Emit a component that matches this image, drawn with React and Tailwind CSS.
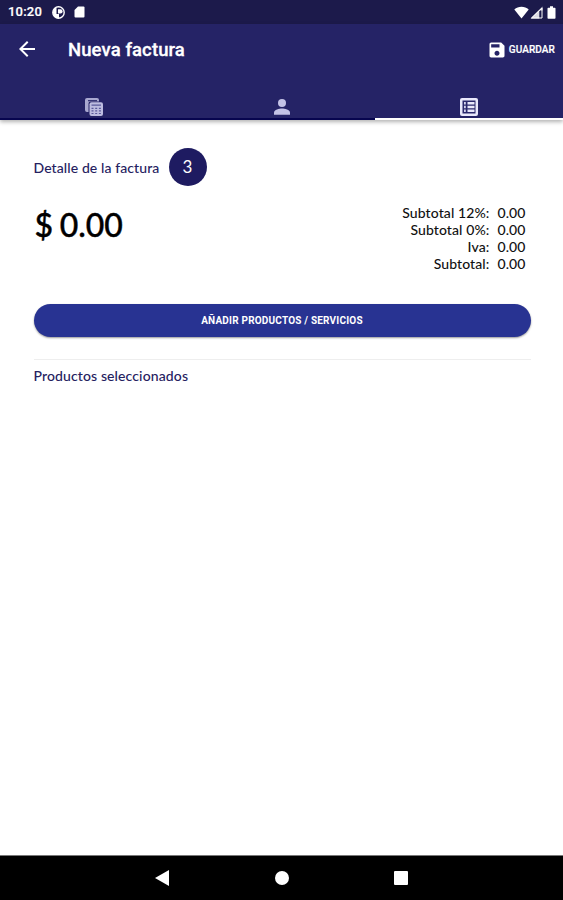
const totals = [
    { label: 'Subtotal 12%:', value: '0.00' },
    { label: 'Subtotal 0%:', value: '0.00' },
    { label: 'Iva:', value: '0.00' },
    { label: 'Subtotal:', value: '0.00' },
];

const StatusBar = () => (
    <div className="h-6 shrink-0 bg-[#1c1a4b] flex items-center justify-between pl-2 pr-[7px] text-white">
        <div className="flex items-center">
            <span className="w-[44px] text-[13px] leading-6 font-medium tracking-[0.2px] [-webkit-text-stroke:0.2px]">10:20</span>
            <svg className="w-[13px] h-[13px]" viewBox="0 0 13 13">
                <circle cx="6.5" cy="6.5" r="5.7" fill="none" stroke="currentColor" strokeWidth="1.4" />
                <path fill="currentColor" d="M1 6.500a5.500 5.500 0 0 1 3.500-5.200V8H7v4.500A6 6 0 0 1 1 6.500z" />
                <path fill="currentColor" d="M6 3.300h2.500a2.100 2.100 0 0 1 0 4.200H6z" />
            </svg>
            <svg className="w-[11px] h-[12px] ml-[9px]" viewBox="0 0 11 12">
                <path fill="currentColor" d="M4 .5h5.500a1 1 0 0 1 1 1v9a1 1 0 0 1-1 1h-8a1 1 0 0 1-1-1V4z" />
            </svg>
        </div>
        <div className="flex items-center">
            <svg className="w-[15px] h-[13px]" viewBox="0 0 15 13">
                <path fill="currentColor" d="M7.500 12.500.3 3.600C2.300 1.800 4.800.8 7.500.8s5.200 1 7.200 2.800z" />
            </svg>
            <svg className="w-[13px] h-[13px] ml-px" viewBox="0 0 13 13">
                <path fill="currentColor" fillOpacity=".85" d="M.5 12.500 12.500.5v4H9.300v8z" />
                <path fill="none" stroke="currentColor" strokeWidth="1" d="M1.500 12H12V2z" />
            </svg>
            <svg className="w-[9px] h-[13px] ml-[4px]" viewBox="0 0 9 13">
                <path fill="currentColor" d="M3 .3h3v1.400h1.700q.8 0 .8.800v9.400q0 .8-.8.800H1.300q-.8 0-.8-.8V2.500q0-.8.8-.8H3z" />
            </svg>
        </div>
    </div>
);

const AppBar = () => (
    <div className="h-[51px] flex items-center justify-between pl-[15px] pr-2 text-white">
        <div className="flex items-center">
            <svg className="w-6 h-6 mb-[2px]" viewBox="0 0 24 24" fill="currentColor">
                <path d="M20 11H7.830l5.590-5.590L12 4l-8 8 8 8 1.410-1.410L7.830 13H20v-2z" />
            </svg>
            <h1 className="ml-[29px] pt-[2px] text-[18.500px] font-medium tracking-[0.1px] whitespace-nowrap [-webkit-text-stroke:0.3px]">Nueva factura</h1>
        </div>
        <button className="flex items-center">
            <svg className="w-[20px] h-[20px]" viewBox="0 0 24 24" fill="currentColor">
                <path d="M17 3H5c-1.110 0-2 .9-2 2v14c0 1.100.89 2 2 2h14c1.100 0 2-.9 2-2V7l-4-4zm-5 16c-1.660 0-3-1.340-3-3s1.340-3 3-3 3 1.340 3 3-1.340 3-3 3zm3-10H5V5h10v4z" />
            </svg>
            <span className="ml-[2px] text-[10px] font-medium tracking-[0.1px] [-webkit-text-stroke:0.2px]">GUARDAR</span>
        </button>
    </div>
);

const Tabs = () => (
    <div className="h-[45px] grid grid-cols-3">
        <div className="flex items-end justify-center pb-[2px] border-b-2 border-[#07054f]">
            <svg className="w-[18px] h-[18px]" viewBox="0 0 18 18">
                <path fill="#a9a8d0" d="M2 0h10a2 2 0 0 1 2 2v1.500H5.500a2 2 0 0 0-2 2V14H2a2 2 0 0 1-2-2V2a2 2 0 0 1 2-2z" />
                <rect x="3" y="2" width="9" height="1.300" fill="#383776" />
                <rect x="4.500" y="4.200" width="13.500" height="13.800" rx="2" fill="#bdbce0" />
                <path fill="#5a599a" d="M6.500 6.500h9.500v1.300H6.500zM6.500 9.700h2v1.300h-2zm3.700 0h2v1.300h-2zm3.700 0h2v1.300h-2zM6.500 12.300h2v1.300h-2zm3.700 0h2v1.300h-2zm3.700 0h2v1.300h-2zM6.500 15h2v1h-2zm3.700 0h2v1h-2zm3.700 0h2v1h-2z" />
            </svg>
        </div>
        <div className="flex items-end justify-center pb-[2px] pl-px border-b-2 border-[#07054f]">
            <svg className="w-[18px] h-[18px]" viewBox="0 0 18 18" fill="#c4c3e6">
                <circle cx="9" cy="5" r="4" />
                <path d="M1 16.700v-2c0-2.800 5.300-4.100 8-4.100s8 1.300 8 4.100v2z" />
            </svg>
        </div>
        <div className="flex items-end justify-center pb-[2px] border-b-2 border-white">
            <svg className="w-[18px] h-[18px]" viewBox="0 0 18 18">
                <rect width="18" height="18" rx="2" fill="#e9e8fb" />
                <rect x="2.500" y="2.500" width="13" height="13" fill="#2a286d" />
                <path fill="#d5d4ee" d="M4 4h1.800v2.500H4zm0 3.700h1.800v2.500H4zm0 3.700h1.800v2.600H4z" />
                <path fill="#e9e8fb" d="M7.500 4h7v2.500h-7zm0 3.700h7v2.500h-7zm0 3.700h7v2.600h-7z" />
            </svg>
        </div>
    </div>
);

const NavBar = () => (
    <div className="h-[45px] shrink-0 bg-black border-t border-[#777] grid grid-cols-[1fr_86px_1fr] items-center">
        <svg className="w-[14px] h-[16px] justify-self-end mr-[70px]" viewBox="0 0 14 16" fill="white">
            <path d="M0 8 14 0v16z" />
        </svg>
        <div className="w-[14px] h-[14px] rounded-full bg-white justify-self-center" />
        <div className="w-[14px] h-[14px] rounded-[1px] bg-white ml-[69px]" />
    </div>
);

const App = () => {
    return (
        <div className="w-[563px] h-[900px] flex flex-col overflow-hidden bg-white font-['Roboto',sans-serif]">
            <StatusBar />
            <header className="shrink-0 bg-[#252366] shadow-[0_2px_4px_rgba(0,0,0,0.3)]">
                <AppBar />
                <Tabs />
            </header>

            <main className="flex-1 pl-[33.500px] pr-[32.500px] pt-7 font-['Lato',sans-serif]">
                <div className="flex items-center">
                    <h2 className="w-[135px] text-[14px] tracking-[0.1px] font-medium text-[#252160] whitespace-nowrap">Detalle de la factura</h2>
                    <span className="w-[38px] h-[38px] rounded-full bg-[#1e1b61] text-white text-[17px] flex items-center justify-center">3</span>
                </div>

                <div className="flex justify-between mt-[18px]">
                    <div className="pt-[1px] pl-px text-[32px] leading-[40px] font-medium text-black whitespace-nowrap [word-spacing:-1.500px] [-webkit-text-stroke:0.4px]">$ 0.00</div>
                    <div className="mr-[5px] grid grid-cols-[auto_auto] gap-x-2 text-[14px] leading-[17px] tracking-[0.1px] font-medium text-[#111] text-right">
                        {totals.map((row) => (
                            <div key={row.label} className="contents">
                                <span>{row.label}</span>
                                <span>{row.value}</span>
                            </div>
                        ))}
                    </div>
                </div>

                <button className="mt-8 w-full h-[33px] rounded-full bg-[#283392] text-white text-[10px] tracking-[0.2px] font-bold shadow-[0_1px_2px_rgba(0,0,0,0.4)] font-['Roboto',sans-serif]">
                    AÑADIR PRODUCTOS / SERVICIOS
                </button>

                <div className="mt-[22px] border-t border-[#eeeeee] pt-[6px]">
                    <h2 className="text-[14px] leading-5 tracking-[0.120px] font-medium text-[#252160]">Productos seleccionados</h2>
                </div>
            </main>

            <NavBar />
        </div>
    );
};

export default App;
